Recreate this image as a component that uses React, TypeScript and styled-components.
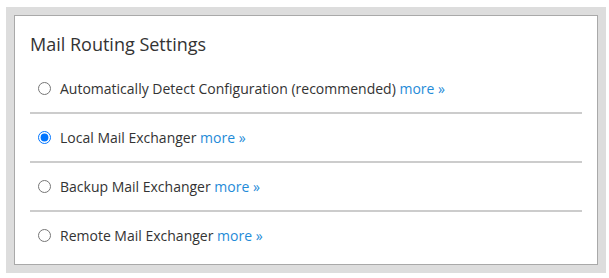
import React, { useState } from 'react';
import styled, { createGlobalStyle } from 'styled-components';

type RouteOption = {
  id: string,
  label: string
}

const options: RouteOption[] = [
  { id: 'auto', label: 'Automatically Detect Configuration (recommended)' },
  { id: 'local', label: 'Local Mail Exchanger' },
  { id: 'backup', label: 'Backup Mail Exchanger' },
  { id: 'remote', label: 'Remote Mail Exchanger' },
];

const App: React.FC = () => {
  const [selected, setSelected] = useState('local');

  return (
    <>
      <GlobalStyle />
      <Frame>
        <Panel>
          <Title>Mail Routing Settings</Title>
          <OptionList>
            {options.map(opt => (
              <OptionRow key={opt.id}>
                <Radio
                  type="radio"
                  name="mxcheck"
                  checked={selected === opt.id}
                  onChange={() => setSelected(opt.id)}
                />
                <OptionLabel>
                  {opt.label} <MoreLink href="#">more »</MoreLink>
                </OptionLabel>
              </OptionRow>
            ))}
          </OptionList>
        </Panel>
      </Frame>
    </>
  )
}

const GlobalStyle = createGlobalStyle`
  body {
    margin: 0;
    background: #fff;
    font-family: "Open Sans", "Liberation Sans", sans-serif;
    color: #333;
  }
`;

const Frame = styled.div`
  box-sizing: border-box;
  margin: 7px 0 0 6px;
  width: 600px;
  height: 266px;
  padding: 8px;
  background: #ddd;
`;

const Panel = styled.div`
  box-sizing: border-box;
  height: 250px;
  padding: 16px 15px 5px;
  background: #fff;
  border: 1px solid #a9a9a9;
`;

const Title = styled.h2`
  margin: 0 0 9px;
  font-size: 18px;
  font-weight: 400;
  line-height: 24px;
  color: #333;
`;

const OptionList = styled.ul`
  list-style: none;
  margin: 0;
  padding: 0;
`;

const OptionRow = styled.li`
  display: flex;
  align-items: center;
  height: 47px;
  border-bottom: 2px solid #ccc;

  &:last-child {
    border-bottom: none;
  }
`;

const Radio = styled.input`
  width: 13px;
  height: 13px;
  margin: 0 9px 0 8px;
  flex: none;
`;

const OptionLabel = styled.label`
  font-size: 14px;
  line-height: 20px;
  color: #333;
`;

const MoreLink = styled.a`
  color: #1f8bd8;
  text-decoration: none;
`;

export default App
